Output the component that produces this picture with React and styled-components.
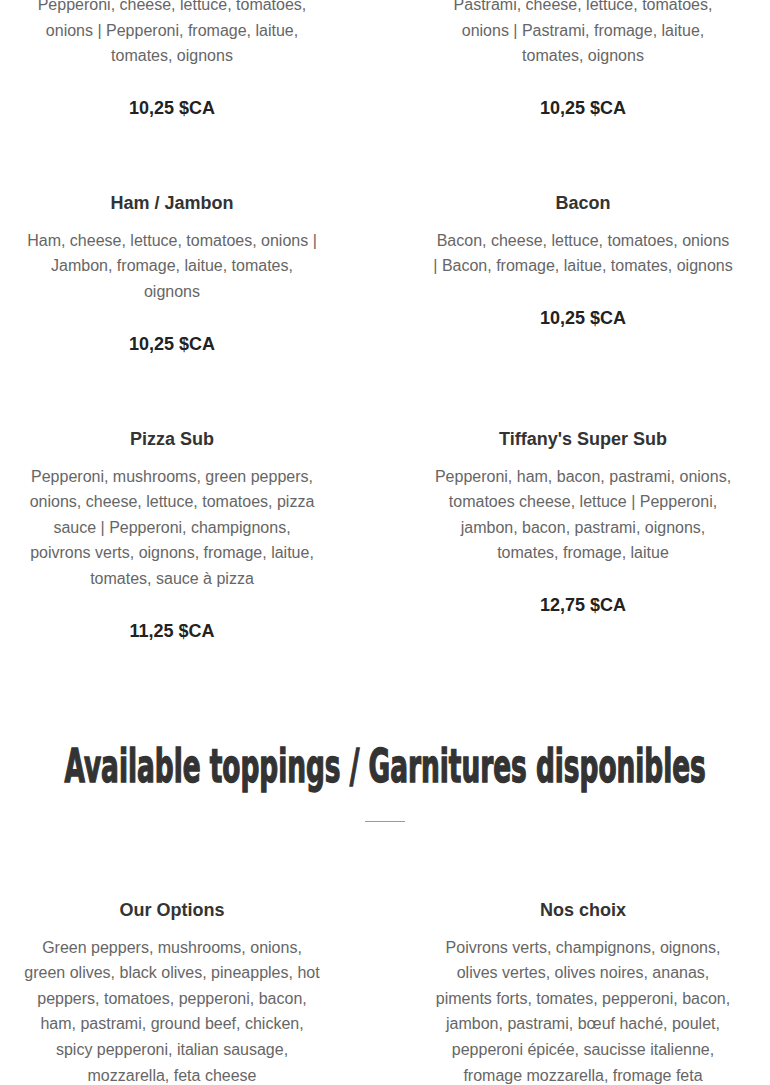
import { useLayoutEffect, useRef, useState } from "react";
import styled, { createGlobalStyle } from "styled-components";

const GlobalStyle = createGlobalStyle`
  html, body {
    margin: 0;
    padding: 0;
    background: #fff;
    overflow: hidden;
  }
  body {
    font-family: "Liberation Sans", Arial, sans-serif;
    -webkit-font-smoothing: antialiased;
  }
`;

const Page = styled.main`
  margin-top: -44px;
`;

const Grid = styled.section`
  display: grid;
  grid-template-columns: 300px 300px;
  column-gap: 111px;
  row-gap: 73px;
  padding: 0 22px;
`;

const Item = styled.article`
  display: flex;
  flex-direction: column;
  align-items: center;
  text-align: center;
`;

const Title = styled.h3`
  margin: 0;
  font-size: 18px;
  line-height: 22px;
  font-weight: 700;
  color: #333;
`;

const Desc = styled.p`
  margin: 14px 0 0;
  font-size: 16px;
  line-height: 25.6px;
  color: #666;
`;

const Price = styled.div`
  margin-top: 28px;
  font-size: 18px;
  line-height: 22px;
  font-weight: 700;
  color: #222;
`;

const HeadingRow = styled.div`
  display: flex;
  justify-content: center;
  margin-top: 96px;
`;

const Heading = styled.h2`
  margin: 0;
  flex: none;
  white-space: nowrap;
  font-family: "DejaVu Sans Condensed", "DejaVu Sans", sans-serif;
  font-size: 47px;
  line-height: 56px;
  font-weight: 700;
  color: #333;
  -webkit-text-stroke: 1.4px #333;
  transform-origin: center;
`;

const Divider = styled.hr`
  width: 40px;
  height: 1px;
  border: 0;
  background: #999;
  margin: 27px auto 77px;
`;

const subs = [
  {
    name: "Pepperoni",
    desc: "Pepperoni, cheese, lettuce, tomatoes, onions | Pepperoni, fromage, laitue, tomates, oignons",
    price: "10,25 $CA",
  },
  {
    name: "Pastrami",
    desc: "Pastrami, cheese, lettuce, tomatoes, onions | Pastrami, fromage, laitue, tomates, oignons",
    price: "10,25 $CA",
  },
  {
    name: "Ham / Jambon",
    desc: "Ham, cheese, lettuce, tomatoes, onions | Jambon, fromage, laitue, tomates, oignons",
    price: "10,25 $CA",
  },
  {
    name: "Bacon",
    desc: "Bacon, cheese, lettuce, tomatoes, onions | Bacon, fromage, laitue, tomates, oignons",
    price: "10,25 $CA",
  },
  {
    name: "Pizza Sub",
    desc: "Pepperoni, mushrooms, green peppers, onions, cheese, lettuce, tomatoes, pizza sauce | Pepperoni, champignons, poivrons verts, oignons, fromage, laitue, tomates, sauce à pizza",
    price: "11,25 $CA",
  },
  {
    name: "Tiffany's Super Sub",
    desc: "Pepperoni, ham, bacon, pastrami, onions, tomatoes cheese, lettuce | Pepperoni, jambon, bacon, pastrami, oignons, tomates, fromage, laitue",
    price: "12,75 $CA",
  },
];

const toppings = [
  {
    name: "Our Options",
    desc: "Green peppers, mushrooms, onions, green olives, black olives, pineapples, hot peppers, tomatoes, pepperoni, bacon, ham, pastrami, ground beef, chicken, spicy pepperoni, italian sausage, mozzarella, feta cheese",
  },
  {
    name: "Nos choix",
    desc: "Poivrons verts, champignons, oignons, olives vertes, olives noires, ananas, piments forts, tomates, pepperoni, bacon, jambon, pastrami, bœuf haché, poulet, pepperoni épicée, saucisse italienne, fromage mozzarella, fromage feta",
  },
];

function MenuItem({ name, desc, price }) {
  return (
    <Item>
      <Title>{name}</Title>
      <Desc>{desc}</Desc>
      {price && <Price>{price}</Price>}
    </Item>
  );
}

function FittedHeading({ children, width }) {
  const ref = useRef(null);
  const [scale, setScale] = useState(1);
  useLayoutEffect(() => {
    if (ref.current) setScale(width / ref.current.offsetWidth);
  }, [width]);
  return (
    <HeadingRow>
      <Heading ref={ref} style={{ transform: `scaleX(${scale})` }}>
        {children}
      </Heading>
    </HeadingRow>
  );
}

export default function App() {
  return (
    <>
      <GlobalStyle />
      <Page>
        <Grid>
          {subs.map((s) => (
            <MenuItem key={s.name} {...s} />
          ))}
        </Grid>
        <FittedHeading width={641}>
          Available toppings / Garnitures disponibles
        </FittedHeading>
        <Divider />
        <Grid>
          {toppings.map((t) => (
            <MenuItem key={t.name} {...t} />
          ))}
        </Grid>
      </Page>
    </>
  );
}
